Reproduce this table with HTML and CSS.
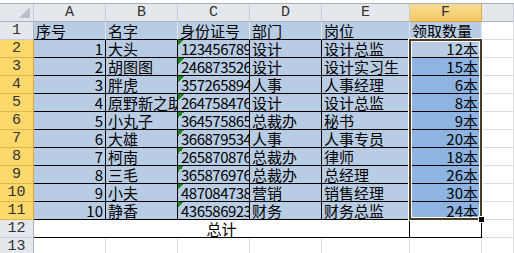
FILE: index.html
```html
<!DOCTYPE html>
<html lang="zh-CN">
<head>
<meta charset="utf-8">
<title>Sheet</title>
<link rel="stylesheet" href="styles.css">
</head>
<body>
<div class="sheet">
  <div class="corner"><svg class="corner-tri" width="11" height="11" viewBox="0 0 11 11"><polygon points="11,0 11,11 0,11" fill="#b9c0c9"/></svg></div>
  <div class="ch">A</div><div class="ch">B</div><div class="ch">C</div><div class="ch">D</div><div class="ch">E</div><div class="ch ch-sel">F</div><div class="ch ch-last"></div>

  <div class="rh">1</div>
  <div class="c h1">序号</div><div class="c h1">名字</div><div class="c h1">身份证号</div><div class="c h1">部门</div><div class="c h1">岗位</div><div class="c h1 h1f">领取数量</div><div class="c g"></div>

  <div class="rh rh-sel">2</div>
  <div class="c d r">1</div><div class="c d">大头</div><div class="c d id">123456789</div><div class="c d">设计</div><div class="c d">设计总监</div><div class="c f act r">12本<span class="selection"></span></div><div class="c g"></div>

  <div class="rh rh-sel">3</div>
  <div class="c d r">2</div><div class="c d">胡图图</div><div class="c d id">246873526</div><div class="c d">设计</div><div class="c d">设计实习生</div><div class="c f r">15本</div><div class="c g"></div>

  <div class="rh rh-sel">4</div>
  <div class="c d r">3</div><div class="c d">胖虎</div><div class="c d id">357265894</div><div class="c d">人事</div><div class="c d">人事经理</div><div class="c f r">6本</div><div class="c g"></div>

  <div class="rh rh-sel">5</div>
  <div class="c d r">4</div><div class="c d clip">原野新之助</div><div class="c d id">264758476</div><div class="c d">设计</div><div class="c d">设计总监</div><div class="c f r">8本</div><div class="c g"></div>

  <div class="rh rh-sel">6</div>
  <div class="c d r">5</div><div class="c d">小丸子</div><div class="c d id">364575865</div><div class="c d">总裁办</div><div class="c d">秘书</div><div class="c f r">9本</div><div class="c g"></div>

  <div class="rh rh-sel">7</div>
  <div class="c d r">6</div><div class="c d">大雄</div><div class="c d id">366879534</div><div class="c d">人事</div><div class="c d">人事专员</div><div class="c f r">20本</div><div class="c g"></div>

  <div class="rh rh-sel">8</div>
  <div class="c d r">7</div><div class="c d">柯南</div><div class="c d id">265870876</div><div class="c d">总裁办</div><div class="c d">律师</div><div class="c f r">18本</div><div class="c g"></div>

  <div class="rh rh-sel">9</div>
  <div class="c d r">8</div><div class="c d">三毛</div><div class="c d id">365876976</div><div class="c d">总裁办</div><div class="c d">总经理</div><div class="c f r">26本</div><div class="c g"></div>

  <div class="rh rh-sel">10</div>
  <div class="c d r">9</div><div class="c d">小夫</div><div class="c d id">487084738</div><div class="c d">营销</div><div class="c d">销售经理</div><div class="c f r">30本</div><div class="c g"></div>

  <div class="rh rh-sel">11</div>
  <div class="c d r">10</div><div class="c d">静香</div><div class="c d id">436586923</div><div class="c d">财务</div><div class="c d">财务总监</div><div class="c f r">24本</div><div class="c g"></div>

  <div class="rh">12</div>
  <div class="c total">总计</div><div class="c ftot"></div><div class="c g"></div>

  <div class="rh">13</div>
  <div class="c"></div><div class="c"></div><div class="c"></div><div class="c"></div><div class="c"></div><div class="c"></div><div class="c g"></div>
</div>
</body>
</html>
```

FILE: styles.css
```css
html, body {
  margin: 0;
  padding: 0;
  background: #ffffff;
  overflow: hidden;
}
body {
  padding-top: 3px;
  width: 514px;
  height: 250px;
}
.sheet {
  display: grid;
  grid-template-columns: 34px 72px 72px 72px 72px 88px 72px 1fr;
  grid-auto-rows: 18px;
  border-top: 1px solid #a9b1bb;
  font-family: "Noto Sans CJK SC", sans-serif;
  font-size: 15px;
  color: #000;
}
.sheet > div {
  box-sizing: border-box;
  border-right: 1px solid #dadcdd;
  border-bottom: 1px solid #dadcdd;
  line-height: 17px;
  white-space: nowrap;
  padding: 0 2px;
}
.clip { overflow: hidden; }
.corner {
  background: #e4e7eb;
  display: flex;
  align-items: flex-end;
  justify-content: flex-end;
  padding: 0 3px 3px 0 !important;
  border-right-color: #c5cad0 !important;
  border-bottom-color: #aab3bd !important;
}
.corner-tri { display: block; }
.ch {
  background: #e4e7eb;
  text-align: center;
  font-family: "Liberation Mono", monospace;
  font-size: 15px;
  color: #333;
  border-right-color: #c8cdd3 !important;
  border-bottom-color: #aab3bd !important;
}
.ch-sel {
  background: linear-gradient(#f9dc93, #f3c865);
  border-right-color: #e2ad45 !important;
  border-bottom-color: #dba233 !important;
}
.rh {
  background: #e4e7eb;
  text-align: center;
  font-family: "Liberation Mono", monospace;
  font-size: 15px;
  color: #333;
  border-right-color: #aab3bd !important;
  border-bottom-color: #c8cdd3 !important;
}
.rh-sel {
  background: #fdd86a;
  border-right-color: #e2a43a !important;
  border-bottom-color: #e8b24c !important;
}
.h1 {
  background: #b8cce4;
  border-right-color: #dce6f1 !important;
  border-bottom-color: #000 !important;
}
.h1f {
  border-bottom-color: #dce6f1 !important;
}
.d {
  background: #b8cce4;
  border-right-color: #000 !important;
  border-bottom-color: #000 !important;
}
.r { text-align: right; }
.id {
  overflow: hidden;
  letter-spacing: -0.5px;
  padding-left: 3px !important;
  background: linear-gradient(135deg, #1b8a1b 50%, transparent 50%) no-repeat 0 0 / 6px 6px, #b8cce4;
}
.f {
  background: #8db4e2;
  border-right-color: #000 !important;
  border-bottom-color: #000 !important;
  padding-right: 3px !important;
}
.act {
  background: #b8cce4;
  position: relative;
}
.total {
  grid-column: span 5;
  text-align: center;
  border-right-color: #000 !important;
  border-bottom-color: #000 !important;
}
.ftot {
  border-right-color: #000 !important;
  border-bottom-color: #000 !important;
}
.selection {
  position: absolute;
  top: -1px;
  left: -1px;
  width: 73px;
  height: 181px;
  box-sizing: border-box;
  border: 2px solid #4a3b28;
  box-shadow: inset 0 0 0 1px #ffffff;
  outline: 1px solid #ffffff;
  z-index: 2;
  pointer-events: none;
}
.selection::after {
  content: "";
  position: absolute;
  right: -4px;
  bottom: -4px;
  width: 5px;
  height: 5px;
  background: #000;
  box-shadow: 0 0 0 1px #ffffff;
}
```
